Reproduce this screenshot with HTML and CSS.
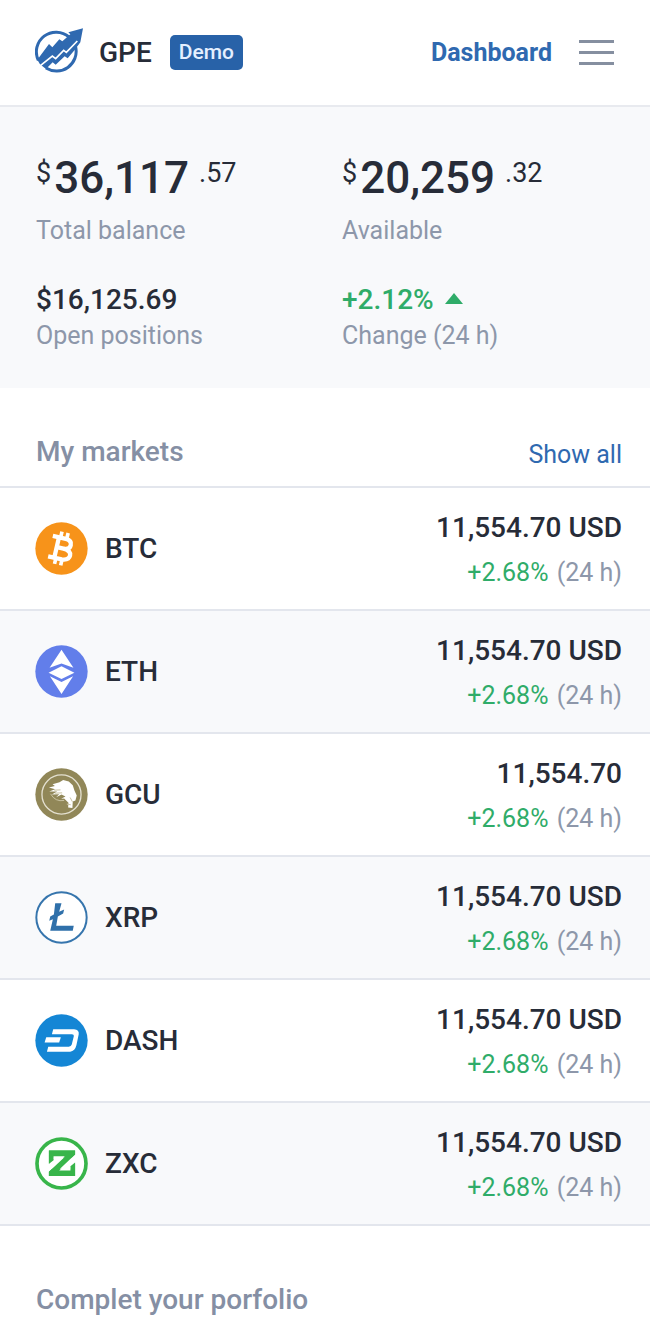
FILE: index.html
```
<!DOCTYPE html>
<html lang="en">

<head>
    <meta charset="UTF-8">
    <meta name="viewport" content="width=device-width, initial-scale=1.0">
    <title>GPE Dashboard</title>
    <link rel="stylesheet" href="styles.css">
</head>

<body>
    <header class="header">
        <a href="#" class="brand">
            <svg class="logo" viewBox="45 53 144 135" aria-hidden="true">
                <path d="M147 80A59 59 0 0 0 55 150M167 110A59 59 0 0 1 78 173" fill="none" stroke="#2f69b0" stroke-width="9" />
                <path d="M52 148L87 101L97 111L118 87L127 93L151 72L145 66L189 54L181 96L164 119L143 144L134 138L107 163L98 156L78 176L60 162Z" fill="#2f69b0" />
                <path d="M62 165L97 137L107 145L131 120L139 126L172 92" fill="none" stroke="#fff" stroke-width="5" />
            </svg>
            <span class="brand-name">GPE</span>
            <span class="badge">Demo</span>
        </a>
        <nav class="nav">
            <a href="#" class="nav-link">Dashboard</a>
            <button type="button" class="menu-button" aria-label="Menu">
                <span></span>
                <span></span>
                <span></span>
            </button>
        </nav>
    </header>

    <main>
        <section class="summary">
            <div class="stat">
                <div class="amount"><span class="currency">$</span><strong>36,117</strong><span class="cents">.57</span></div>
                <div class="label">Total balance</div>
            </div>
            <div class="stat">
                <div class="amount"><span class="currency">$</span><strong>20,259</strong><span class="cents">.32</span></div>
                <div class="label">Available</div>
            </div>
            <div class="stat">
                <div class="value">$16,125.69</div>
                <div class="label">Open positions</div>
            </div>
            <div class="stat">
                <div class="value up">+2.12% <span class="triangle"></span></div>
                <div class="label">Change (24 h)</div>
            </div>
        </section>

        <section class="markets">
            <div class="section-header">
                <h2>My markets</h2>
                <a href="#" class="show-all">Show all</a>
            </div>
            <ul class="market-list">
                <li class="market">
                    <svg class="coin" viewBox="0 0 160 160" aria-hidden="true">
                        <circle cx="80" cy="80" r="79" fill="#f7931a" />
                        <g transform="rotate(13 80 80)" fill="none" stroke="#fff" stroke-width="13">
                            <path d="M46 49H86Q105 49 105 64T86 79H66M86 79Q110 80 110 95T88 112H46M65 49V112" />
                            <path d="M70 30V50M89 30V50M70 110V130M89 110V130" stroke-width="11" />
                        </g>
                    </svg>
                    <span class="market-name">BTC</span>
                    <div class="quote">
                        <div class="price">11,554.70 USD</div>
                        <div class="change"><span class="up">+2.68%</span> (24 h)</div>
                    </div>
                </li>
                <li class="market">
                    <svg class="coin" viewBox="0 0 160 160" aria-hidden="true">
                        <circle cx="80" cy="80" r="79" fill="#627eea" />
                        <path d="M80 14L116 69L80 56L44 69Z" fill="#fff" />
                        <path d="M80 64L119 84L80 103L41 84Z" fill="#fff" />
                        <path d="M45 94L80 112L115 94L80 148Z" fill="#fff" />
                    </svg>
                    <span class="market-name">ETH</span>
                    <div class="quote">
                        <div class="price">11,554.70 USD</div>
                        <div class="change"><span class="up">+2.68%</span> (24 h)</div>
                    </div>
                </li>
                <li class="market">
                    <svg class="coin" viewBox="0 0 160 160" aria-hidden="true">
                        <circle cx="80" cy="80" r="79" fill="#918758" />
                        <circle cx="80" cy="80" r="59" fill="none" stroke="#e4e0d0" stroke-width="4" />
                        <path d="M42 59L60 54L53 49L74 43L85 36L102 41L114 52L119 68L126 83L122 98L114 101L113 121L100 119L101 105L88 92L79 93L92 86L80 80L64 88L73 79L51 80L67 71L43 71L61 64Z" fill="#fff" />
                        <path d="M47 78Q61 103 88 98M58 67L77 66M60 76L82 75M96 109L108 111M106 89L113 102" fill="none" stroke="#c9c2a1" stroke-width="3" />
                    </svg>
                    <span class="market-name">GCU</span>
                    <div class="quote">
                        <div class="price">11,554.70</div>
                        <div class="change"><span class="up">+2.68%</span> (24 h)</div>
                    </div>
                </li>
                <li class="market">
                    <svg class="coin" viewBox="0 0 160 160" aria-hidden="true">
                        <circle cx="80" cy="80" r="76" fill="#fff" stroke="#3675ad" stroke-width="6" />
                        <path d="M61 37H80L73 63L88 56L85 68L69 77L64 105H117L114 120H46L54 85L43 90L46 77L57 71Z" fill="#2f70aa" />
                    </svg>
                    <span class="market-name">XRP</span>
                    <div class="quote">
                        <div class="price">11,554.70 USD</div>
                        <div class="change"><span class="up">+2.68%</span> (24 h)</div>
                    </div>
                </li>
                <li class="market">
                    <svg class="coin" viewBox="0 0 160 160" aria-hidden="true">
                        <circle cx="80" cy="80" r="79" fill="#1486d5" />
                        <path d="M55 46H118Q134 47 132 61L125 94Q121 111 106 114H36L40 99H102Q109 98 111 92L117 68Q118 61 111 61H51Z" fill="#fff" />
                        <path d="M34 70H78L73 86H29Z" fill="#fff" />
                    </svg>
                    <span class="market-name">DASH</span>
                    <div class="quote">
                        <div class="price">11,554.70 USD</div>
                        <div class="change"><span class="up">+2.68%</span> (24 h)</div>
                    </div>
                </li>
                <li class="market">
                    <svg class="coin" viewBox="0 0 160 160" aria-hidden="true">
                        <circle cx="80" cy="80" r="74" fill="#fff" stroke="#38b54a" stroke-width="11" />
                        <path d="M42 41H121V53L66 105H107V94L121 80V118H42V105L96 54H56V67L42 81Z" fill="#38b54a" />
                        <path d="M42 41H121V53L111 62H56V70L42 81ZM121 118H42V105L52 96H107V88L121 77Z" fill="#38b54a" />
                        <path d="M56 58H90L80 67H56ZM107 101H73L83 92H107Z" fill="#fff" />
                    </svg>
                    <span class="market-name">ZXC</span>
                    <div class="quote">
                        <div class="price">11,554.70 USD</div>
                        <div class="change"><span class="up">+2.68%</span> (24 h)</div>
                    </div>
                </li>
            </ul>
        </section>

        <section class="portfolio">
            <h2>Complet your porfolio</h2>
        </section>
    </main>
</body>

</html>
```
FILE: styles.css
```
* {
    box-sizing: border-box;
}

body {
    font-family: Roboto, Arial, sans-serif;
    margin: 0;
    background-color: #fff;
    color: #272c38;
}

a {
    color: #2f69b0;
    text-decoration: none;
}

h2 {
    margin: 0;
    font-size: 28px;
    line-height: 32px;
    font-weight: 500;
    color: #858fa4;
}

.header {
    display: flex;
    justify-content: space-between;
    align-items: center;
    height: 107px;
    padding: 0 36px 0 35px;
    border-bottom: 2px solid #e8eaef;
}

.brand {
    display: flex;
    align-items: center;
}

.logo {
    width: 48px;
    height: 45px;
    margin: 0 16px 4px 0;
}

.brand-name {
    font-size: 28px;
    font-weight: 500;
    color: #272c38;
    margin-right: 18px;
}

.badge {
    padding: 0 9px;
    border-radius: 5px;
    background-color: #2862a8;
    color: #e4efff;
    font-size: 21px;
    line-height: 35px;
    font-weight: 500;
}

.nav {
    display: flex;
    align-items: center;
    gap: 27px;
}

.nav-link {
    font-size: 25px;
    font-weight: 700;
}

.menu-button {
    display: flex;
    flex-direction: column;
    gap: 8px;
    width: 35px;
    padding: 0;
    border: none;
    background: none;
    cursor: pointer;
}

.menu-button span {
    height: 3px;
    background-color: #858fa0;
}

.summary {
    display: grid;
    grid-template-columns: 1fr 1fr;
    column-gap: 34px;
    row-gap: 33px;
    padding: 46px 36px 36px;
    background-color: #f8f9fb;
}

.amount {
    display: flex;
    align-items: flex-start;
    height: 62px;
}

.amount strong {
    margin: 0 10px 0 3px;
    font-size: 44px;
    line-height: 50px;
    font-weight: 500;
}

.currency,
.cents {
    font-size: 27px;
    line-height: 40px;
}

.label {
    font-size: 25px;
    line-height: 32px;
    color: #8d97aa;
}

.value {
    font-size: 28px;
    line-height: 40px;
    font-weight: 500;
}

.up {
    color: #2fac69;
}

.triangle {
    display: inline-block;
    margin-left: 4px;
    vertical-align: 5px;
    border: 9px solid transparent;
    border-top: none;
    border-bottom: 11px solid #2fac69;
}

.section-header {
    display: flex;
    justify-content: space-between;
    align-items: flex-end;
    padding: 48px 28px 18px 36px;
    border-bottom: 2px solid #e3e6ed;
}

.show-all {
    font-size: 25px;
    line-height: 26px;
}

.market-list {
    margin: 0;
    padding: 0;
    list-style: none;
}

.market {
    display: flex;
    align-items: center;
    padding: 15px 28px 16px 35px;
    border-bottom: 2px solid #e3e6ed;
}

.market:nth-child(even) {
    background-color: #f8f9fb;
}

.coin {
    width: 53px;
    height: 53px;
    margin-right: 17px;
}

.market-name {
    font-size: 28px;
    font-weight: 500;
}

.quote {
    margin-left: auto;
    text-align: right;
}

.price {
    font-size: 28px;
    line-height: 50px;
    font-weight: 500;
}

.change {
    font-size: 25px;
    line-height: 40px;
    color: #8d97aa;
}

.change .up {
    margin-right: 2px;
}

.portfolio {
    padding: 58px 36px 24px;
}
```
